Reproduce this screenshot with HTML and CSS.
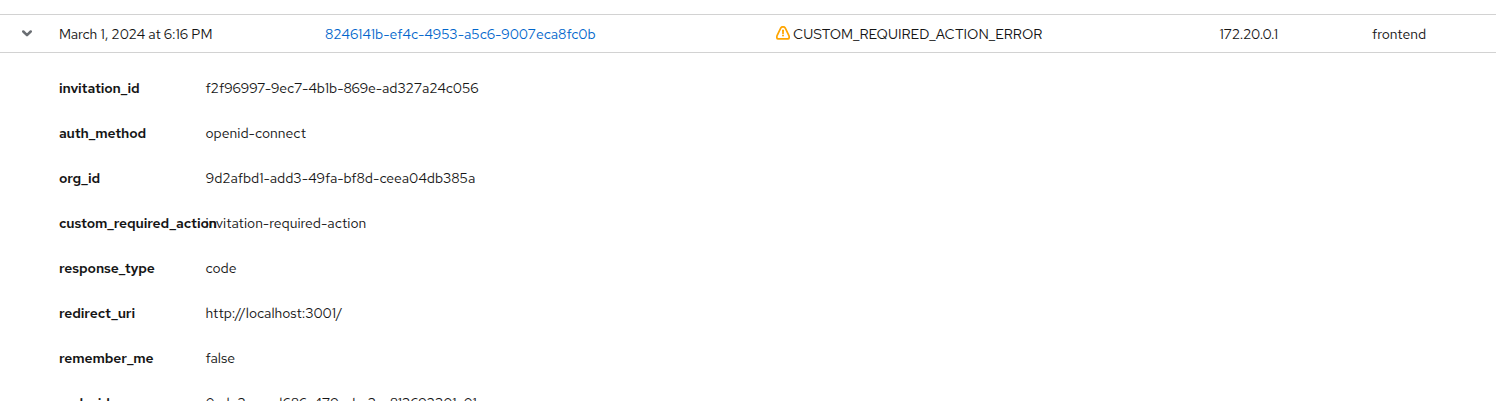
FILE: index.html
```
<!DOCTYPE html>
<html lang="en">
<head>
<meta charset="utf-8">
<title>Events</title>
<link rel="stylesheet" href="styles.css">
</head>
<body>
<main class="events">
  <div class="event-row">
    <span class="toggle"><svg width="10" height="7" viewBox="0 0 10 7"><path d="M1.3 1.5 5 5.2 8.7 1.5" fill="none" stroke="#6a6e73" stroke-width="2.5" stroke-linecap="round" stroke-linejoin="round"/></svg></span>
    <span class="date">March 1, 2024 at 6:16 PM</span>
    <a class="user">8246141b-ef4c-4953-a5c6-9007eca8fc0b</a>
    <span class="event-type">
      <svg class="warning" width="14" height="14" viewBox="0 0 14 14"><path d="M4.8 2Q5.5.9 6.6.9H7.4Q8.5.9 9.2 2L12.9 9.6Q13.2 10.5 13.2 11.4Q13.1 12.9 11.7 12.9H2.3Q.9 12.9.8 11.4Q.8 10.5 1.1 9.6Z" fill="none" stroke="#ffa500" stroke-width="1.7"/><path d="M6 3.7H8L7.8 8H6.2Z" fill="#ffa500"/><circle cx="7" cy="9.6" r="1" fill="#ffa500"/></svg>
      <span>CUSTOM_REQUIRED_ACTION_ERROR</span>
    </span>
    <span class="ip">172.20.0.1</span>
    <span>frontend</span>
  </div>
  <dl class="details">
    <dt>invitation_id</dt><dd class="invitation">f2f96997-9ec7-4b1b-869e-ad327a24c056</dd>
    <dt>auth_method</dt><dd>openid-connect</dd>
    <dt>org_id</dt><dd class="org">9d2afbd1-add3-49fa-bf8d-ceea04db385a</dd>
    <dt>custom_required_action</dt><dd>invitation-required-action</dd>
    <dt>response_type</dt><dd>code</dd>
    <dt>redirect_uri</dt><dd class="uri">http://localhost:3001/</dd>
    <dt>remember_me</dt><dd>false</dd>
    <dt>code_id</dt><dd class="code">0cde3aec-d686-479c-ba3a-813692301c01</dd>
  </dl>
</main>
</body>
</html>
```
FILE: styles.css
```
* { box-sizing: border-box; }
body {
  margin: 0;
  background: #fff;
  color: #151515;
  font: 14px/21px "Red Hat Text", Lato, "Open Sans", sans-serif;
}
.events { height: 401px; padding-top: 14px; overflow: hidden; }
.event-row {
  display: grid;
  grid-template-columns: 59px 266px 451px 443.5px 152.5px 1fr;
  align-items: center;
  height: 39px;
  padding-top: 1px;
  border-top: 1px solid #d2d2d2;
  border-bottom: 1px solid #d2d2d2;
  white-space: nowrap;
}
.toggle { display: flex; padding: 0 0 2px 22px; }
.event-type { display: flex; align-items: center; gap: 3px; }
.warning { flex: none; margin-bottom: 2px; }
.date { letter-spacing: -0.07px; }
.user { color: #06c; letter-spacing: -0.05px; }
.ip { letter-spacing: -0.3px; }
.details {
  display: grid;
  grid-template-columns: 146.5px 1fr;
  grid-auto-rows: 21px;
  row-gap: 24px;
  margin: 0;
  padding: 25px 0 0 59px;
  white-space: nowrap;
}
dt { font-weight: 600; letter-spacing: -0.11px; }
dd { margin: 0; }
.invitation { letter-spacing: -0.1px; }
.org { letter-spacing: -0.03px; }
.uri { letter-spacing: -0.03px; }
.code { letter-spacing: -0.05px; }
```
